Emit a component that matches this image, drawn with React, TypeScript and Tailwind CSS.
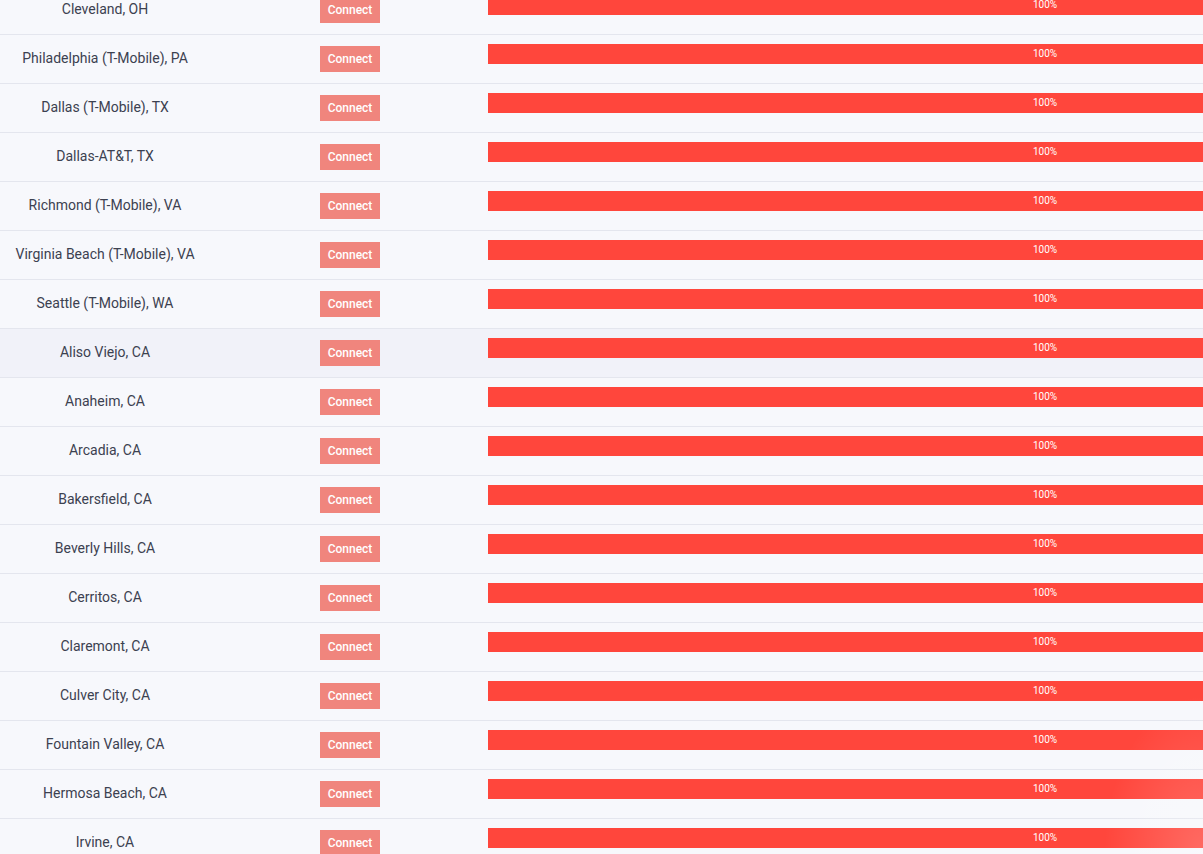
// Server list: location, connect button, load bar

const SERVERS = [
  'Cleveland, OH',
  'Philadelphia (T-Mobile), PA',
  'Dallas (T-Mobile), TX',
  'Dallas-AT&T, TX',
  'Richmond (T-Mobile), VA',
  'Virginia Beach (T-Mobile), VA',
  'Seattle (T-Mobile), WA',
  'Aliso Viejo, CA',
  'Anaheim, CA',
  'Arcadia, CA',
  'Bakersfield, CA',
  'Beverly Hills, CA',
  'Cerritos, CA',
  'Claremont, CA',
  'Culver City, CA',
  'Fountain Valley, CA',
  'Hermosa Beach, CA',
  'Irvine, CA',
  'Long Beach, CA',
]

export default function App() {
  return (
    <div className="relative h-[854px] overflow-hidden bg-[#f7f8fc] font-['Roboto',sans-serif]">
      <div className="mt-[-14px] w-[1602px]">
        {SERVERS.map((name) => (
          <div
            key={name}
            className={`flex h-[49px] items-center border-b border-[#e4e6ee] ${name === 'Aliso Viejo, CA' ? 'bg-[#f1f2f9]' : ''}`}
          >
            <div className="w-[210px] shrink-0 pb-[2px] text-center text-[14px] text-[#3c4150]">{name}</div>
            <div className="ml-[110px] w-[168px] shrink-0">
              <button className="h-[26px] w-[60px] bg-[#f0857d] text-[12px] font-medium text-white">Connect</button>
            </div>
            <div className="mb-[10px] flex h-[20px] w-[1114px] shrink-0 items-start justify-center bg-[#ff463c] text-[10px] leading-[19px] text-white">
              100%
            </div>
          </div>
        ))}
      </div>
      <div className="pointer-events-none absolute bottom-0 right-0 h-[160px] w-[100px] bg-[radial-gradient(ellipse_at_bottom_right,rgba(255,255,255,0.2),rgba(255,255,255,0)_70%)]" />
    </div>
  )
}
